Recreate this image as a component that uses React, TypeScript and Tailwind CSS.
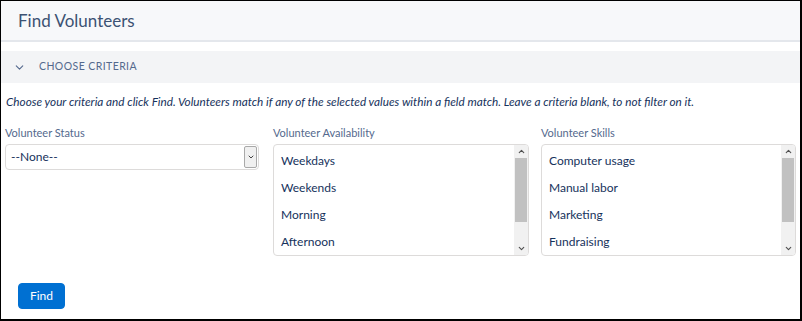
import { ChevronDown, ChevronUp } from 'lucide-react';

const availability = ['Weekdays', 'Weekends', 'Morning', 'Afternoon'];
const skills = ['Computer usage', 'Manual labor', 'Marketing', 'Fundraising'];

function ListBox({ items }: { items: string[] }) {
  return (
    <div className="flex h-[112px] overflow-hidden rounded-[4px] border border-[#dddbda] bg-white">
      <div className="flex-1 pt-[2px]">
        {items.map((item) => (
          <div key={item} className="flex h-[27px] items-center px-[7px] text-[12px] text-[#16325c]">
            {item}
          </div>
        ))}
      </div>
      {/* scrollbar */}
      <div className="flex w-[14px] flex-col bg-[#f1f1f1]">
        <div className="flex h-[13px] items-center justify-center text-[#505050]">
          <ChevronUp size={9} strokeWidth={3} />
        </div>
        <div className="mx-[1px] h-[64px] bg-[#c1c1c1]" />
        <div className="flex-1" />
        <div className="flex h-[13px] items-center justify-center text-[#505050]">
          <ChevronDown size={9} strokeWidth={3} />
        </div>
      </div>
    </div>
  );
}

export default function App() {
  return (
    <div
      className="h-[321px] w-[802px] overflow-hidden border-l border-t border-r-2 border-b-2 border-black bg-white"
      style={{ fontFamily: 'Lato, "Open Sans", sans-serif' }}
    >
      <div className="flex h-[41px] items-center border-b-2 border-[#e4e7ec] bg-[#f7f8fa] pl-[17px]">
        <h1 className="text-[17px] text-[#3c5273]">Find Volunteers</h1>
      </div>

      <div className="mt-[9px] flex h-[32px] items-center bg-[#f3f4f6] pl-[12px]">
        <ChevronDown size={13} strokeWidth={2} className="text-[#54698d]" />
        <span className="ml-[13px] text-[10.5px] tracking-[0.04em] text-[#54698d]">CHOOSE CRITERIA</span>
      </div>

      <p className="mt-[10px] pl-[5px] text-[11.75px] italic text-[#16325c]">
        Choose your criteria and click Find. Volunteers match if any of the selected values within a field match. Leave a criteria blank, to not filter on it.
      </p>

      <div className="mt-[14px] flex pl-[4px]">
        <div className="w-[254px]">
          <div className="mb-[3px] text-[11px] text-[#54698d]">Volunteer Status</div>
          <div className="flex h-[26px] items-center justify-between rounded-[4px] border border-[#dddbda] bg-white pl-[5px] pr-[1px]">
            <span className="text-[12px] text-[#16325c]">--None--</span>
            <div className="flex h-[22px] w-[13px] items-center justify-center rounded-[2px] border border-[#a9a9a9] bg-[#f0f0f0] text-[#444]">
              <ChevronDown size={8} strokeWidth={3} />
            </div>
          </div>
        </div>
        <div className="ml-[14px] w-[256px]">
          <div className="mb-[3px] text-[11px] text-[#54698d]">Volunteer Availability</div>
          <ListBox items={availability} />
        </div>
        <div className="ml-[12px] w-[255px]">
          <div className="mb-[3px] text-[11px] text-[#54698d]">Volunteer Skills</div>
          <ListBox items={skills} />
        </div>
      </div>

      <div className="mt-[26px] pl-[17px]">
        <button className="h-[26px] w-[47px] rounded-[4px] border border-[#0070d2] bg-[#0070d2] text-[12px] text-white">
          Find
        </button>
      </div>
    </div>
  );
}
